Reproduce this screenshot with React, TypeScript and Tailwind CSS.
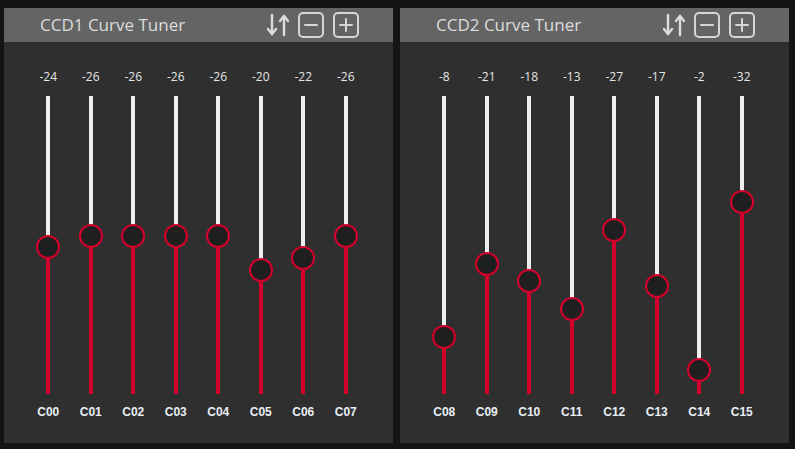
import React from 'react';

type Channel = { name: string; value: number };

const ccd1: Channel[] = [
  { name: 'C00', value: -24 },
  { name: 'C01', value: -26 },
  { name: 'C02', value: -26 },
  { name: 'C03', value: -26 },
  { name: 'C04', value: -26 },
  { name: 'C05', value: -20 },
  { name: 'C06', value: -22 },
  { name: 'C07', value: -26 },
];

const ccd2: Channel[] = [
  { name: 'C08', value: -8 },
  { name: 'C09', value: -21 },
  { name: 'C10', value: -18 },
  { name: 'C11', value: -13 },
  { name: 'C12', value: -27 },
  { name: 'C13', value: -17 },
  { name: 'C14', value: -2 },
  { name: 'C15', value: -32 },
];

// knob offset from track top, in px
const knobOffset = (v: number) => 140 + (v + 26) * 5.6;

const SortIcon = () => (
  <svg width="22" height="24" viewBox="0 0 22 24" fill="none" stroke="#dedede" strokeWidth="2.4" strokeLinecap="round" strokeLinejoin="round">
    <path d="M5 2v19" />
    <path d="M1 16l4 5 4-5" />
    <path d="M17 22V3" />
    <path d="M13 8l4-5 4 5" />
  </svg>
);

const BoxButton = ({ plus }: { plus?: boolean }) => (
  <svg width="26" height="26" viewBox="0 0 26 26" fill="none" stroke="#d6d6d6" strokeWidth="2" strokeLinecap="round">
    <rect x="1" y="1" width="24" height="24" rx="4" />
    <path d="M7 13h12" />
    {plus && <path d="M13 7v12" />}
  </svg>
);

const Slider = ({ ch }: { ch: Channel }) => {
  const top = knobOffset(ch.value);
  return (
    <div className="flex flex-col items-center">
      <div className="h-[14px] text-[12px] leading-[14px] text-[#e6e6e6]" style={{ fontFamily: '"Open Sans", sans-serif' }}>
        {ch.value}
      </div>
      <div className="relative mt-[12px] h-[298px] w-[4px] flex flex-col">
        <div className="bg-[#efefef] w-full" style={{ height: top }} />
        <div className="bg-[#d4002c] w-full flex-1" />
        <div
          className="absolute left-1/2 -translate-x-1/2 -translate-y-1/2 w-[24px] h-[24px] rounded-full bg-[#1f1f1f] border-2 border-[#d4002c]"
          style={{ top }}
        />
      </div>
      <div className="mt-[11px] text-[12px] leading-[14px] font-bold text-[#e8eef5]" style={{ fontFamily: '"Liberation Sans", sans-serif' }}>
        {ch.name}
      </div>
    </div>
  );
};

const Panel = ({ title, channels }: { title: string; channels: Channel[] }) => (
  <div className="w-[389px] h-[435px] bg-[#2f2f2f] flex flex-col">
    <div className="h-[34px] bg-[#646464] flex items-center pl-[36px] pr-[34px]">
      <span className="text-[17px] text-[#dcdcdc] flex-1" style={{ fontFamily: '"Open Sans", sans-serif' }}>
        {title}
      </span>
      <div className="flex items-center gap-[9px]">
        <SortIcon />
        <BoxButton />
        <BoxButton plus />
      </div>
    </div>
    <div className="grid grid-cols-8 pl-[23px] pr-[26px] pt-[28px]">
      {channels.map(ch => (
        <Slider key={ch.name} ch={ch} />
      ))}
    </div>
  </div>
);

export default function App() {
  return (
    <div className="w-[795px] h-[449px] bg-[#141414] flex gap-[7px] pt-[8px] pl-[4px]">
      <Panel title="CCD1 Curve Tuner" channels={ccd1} />
      <Panel title="CCD2 Curve Tuner" channels={ccd2} />
    </div>
  );
}
